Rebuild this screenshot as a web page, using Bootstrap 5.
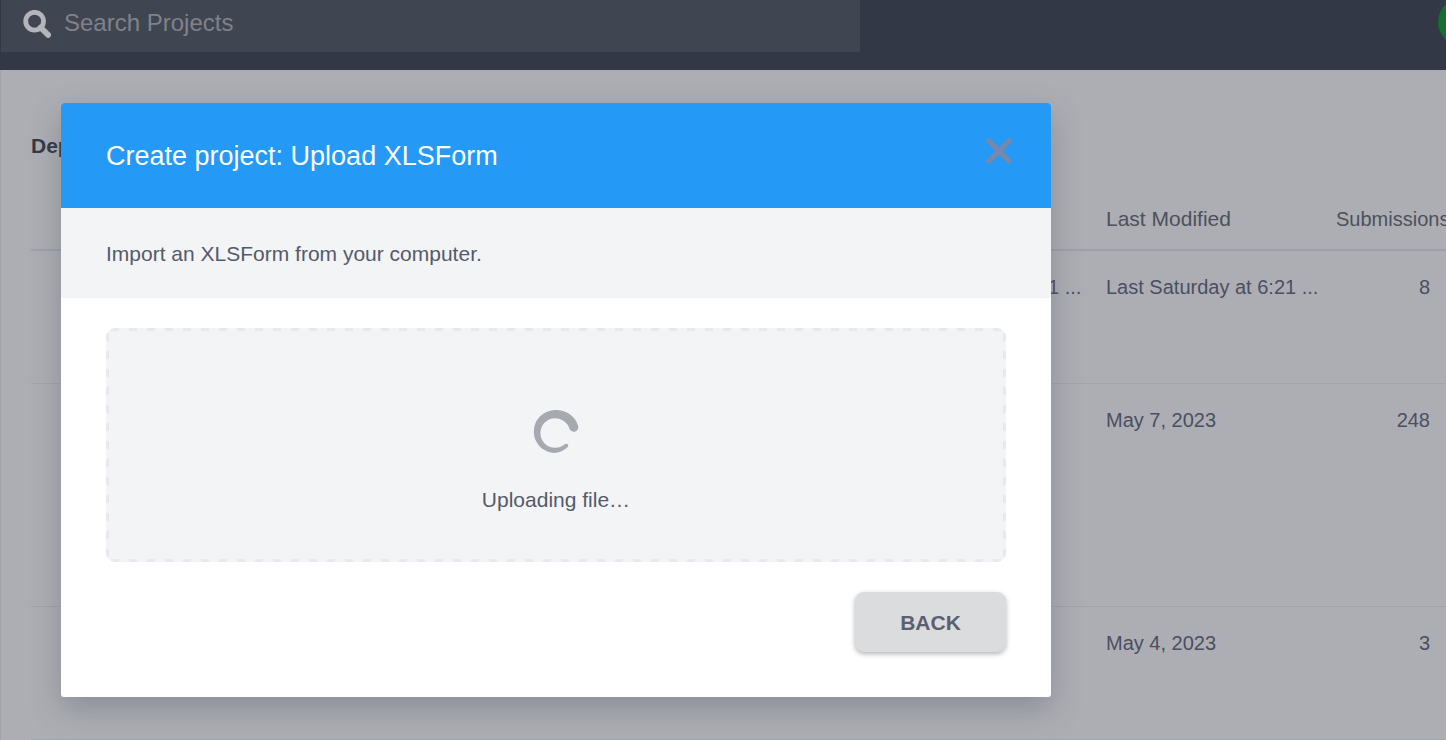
<!DOCTYPE html>
<html lang="en">
<head>
<meta charset="utf-8">
<meta name="viewport" content="width=device-width, initial-scale=1">
<title>Create project</title>
<link rel="stylesheet" href="https://cdn.jsdelivr.net/npm/bootstrap@5.3.0/dist/css/bootstrap.min.css">
<style>
  body { font-family: "Liberation Sans", Arial, sans-serif; font-size: 21px; line-height: 30px; color: #555a6b; background: #adaeb3; }
  .page-shell { min-height: 100vh; }
  .top-bar { height: 70px; background: #333846; }
  .search-box { width: 59.4%; height: 52px; padding-left: 22px; padding-bottom: 6px; margin-left: 1px; gap: 13px; background: #404552; color: #b4b5ba; }
  .search-box input { font-size: 24px; line-height: 30px; color: #7f828b; }
  .search-box input::placeholder { color: #7f828b; opacity: 1; }
  .search-box svg { margin-top: 2px; }
  .avatar { width: 48px; height: 48px; margin-right: -40px; margin-top: -2px; background: #157030; }
  .project-list { border-left: 1px solid #a1a2ad; padding: 60px 0 0 30px; }
  .group-title { font-size: 21px; line-height: 30px; font-weight: 700; color: #333846; margin: 1px 0 43px; }
  .project-table { table-layout: fixed; --bs-table-bg: transparent; --bs-table-color: #4a4f63; border-color: #a1a3ae; font-size: 20px; }
  .project-table th { height: 46px; padding: 0 15px 15px; font-size: 21px; font-weight: 400; color: #4c515c; white-space: nowrap; border-bottom: 2px solid #9d9fac; }
  .project-table td { padding: 21px 15px; white-space: nowrap; }
  .project-table th.count-head { font-size: 20px; }
  .project-table .count-cell { font-size: 20px; padding-right: 16px; text-align: right; }
  .project-table .tall-row td { height: 223px; }
  .project-table .short-row td { height: 133px; }
  .col-deployed { width: 237px; }
  .col-modified { width: 230px; }
  .col-count { width: 125px; }
  .overlay { position: absolute; top: 0; left: 0; right: 0; padding: 103px 61px 40px; }
  .upload-dialog { max-width: 990px; border-radius: 3px; background: #fff; box-shadow: 0 12px 30px rgba(80, 86, 106, .36); }
  .dialog-top { height: 105px; padding: 0 37px 0 45px; background: #2499f5; border-radius: 3px 3px 0 0; }
  .dialog-top h1 { font-size: 27px; line-height: 36px; font-weight: 400; color: #fff; }
  .close-x { margin-bottom: 10px; }
  .dialog-note { padding: 31px 45px 29px; background: #f2f4f6; }
  .dialog-main { padding: 30px 45px 45px; }
  .drop-zone {
    --dash: transparent 0 5px, #e7e9ef 5px 13px, transparent 13px 18px;
    height: 234px; padding-top: 81px; border-radius: 9px;
    background:
      repeating-linear-gradient(90deg, var(--dash)) top / 100% 3px no-repeat,
      repeating-linear-gradient(90deg, var(--dash)) bottom / 100% 3px no-repeat,
      repeating-linear-gradient(180deg, var(--dash)) left / 3px 100% no-repeat,
      repeating-linear-gradient(180deg, var(--dash)) right / 3px 100% no-repeat,
      #f2f4f6;
  }
  .drop-zone p { margin-top: 30px; }
  .back-btn { width: 151px; height: 60px; padding: 8px 0 6px; border: 0; border-radius: 9px; font-size: 21px; font-weight: 700; color: #5b6070; background: #dbdcde; box-shadow: 0 2px 5px rgba(0, 0, 0, .3); margin-top: 30px; }
</style>
</head>
<body>
<div class="page-shell position-relative overflow-hidden d-flex flex-column">
  <header class="top-bar d-flex justify-content-between align-items-start">
    <label class="search-box d-flex align-items-center">
      <svg class="flex-shrink-0" width="28" height="28" viewBox="0 0 28 28" fill="none" stroke="currentColor" aria-hidden="true">
        <circle cx="11.6" cy="11.2" r="8.9" stroke-width="4.8"/>
        <path d="M17.5 17.5l7.6 7.4" stroke-width="5.8" stroke-linecap="round"/>
      </svg>
      <input type="text" class="form-control bg-transparent border-0 shadow-none p-0" placeholder="Search Projects" aria-label="Search Projects">
    </label>
    <div class="avatar rounded-circle flex-shrink-0"></div>
  </header>

  <main class="project-list flex-grow-1">
    <h2 class="group-title">Deployed</h2>
    <table class="table project-table mb-0">
      <colgroup><col><col class="col-deployed"><col class="col-modified"><col class="col-count"></colgroup>
      <thead>
        <tr><th></th><th></th><th scope="col">Last Modified</th><th scope="col" class="count-head">Submissions</th></tr>
      </thead>
      <tbody>
        <tr class="short-row"><td></td><td>Last Saturday at 6:21 ...</td><td>Last Saturday at 6:21 ...</td><td class="count-cell">8</td></tr>
        <tr class="tall-row"><td></td><td></td><td>May 7, 2023</td><td class="count-cell">248</td></tr>
        <tr class="short-row"><td></td><td></td><td>May 4, 2023</td><td class="count-cell">3</td></tr>
      </tbody>
    </table>
  </main>

  <div class="overlay">
    <section class="upload-dialog" role="dialog" aria-labelledby="dialog-title">
      <div class="dialog-top d-flex justify-content-between align-items-center">
        <h1 id="dialog-title" class="mb-0">Create project: Upload XLSForm</h1>
        <button type="button" class="close-x btn border-0 p-0 d-flex" aria-label="Close">
          <svg width="30" height="30" viewBox="0 0 30 30" fill="none" stroke="#7b87a6" stroke-width="5" stroke-linecap="round" aria-hidden="true">
            <path d="M4.7 4.7l20.6 20.6M25.3 4.7L4.7 25.3"/>
          </svg>
        </button>
      </div>
      <div class="dialog-note">Import an XLSForm from your computer.</div>
      <div class="dialog-main">
        <div class="drop-zone d-flex flex-column align-items-center">
          <svg width="48" height="46" viewBox="0 0 48 46" fill="#a6a9b1" aria-hidden="true">
            <path d="M35.4 38.3A20.5 20.5 0 0 1 22.8 43.9A21 21.4 0 0 1 1.8 22.5A21.6 21.4 0 0 1 23.4 1A23 22 0 0 1 46 16.5A4.4 4.4 0 0 1 37.5 19.8A15 14.6 0 0 0 23.3 9.3A14.8 14.8 0 0 0 8.4 24.1A14.6 14.6 0 0 0 23 38.8A15 15 0 0 0 33.2 35.1A1.9 1.9 0 0 1 35.4 38.3Z"/>
          </svg>
          <p class="mb-0">Uploading file…</p>
        </div>
        <div class="d-flex justify-content-end">
          <button type="button" class="back-btn btn">BACK</button>
        </div>
      </div>
    </section>
  </div>
</div>
<script src="https://cdn.jsdelivr.net/npm/bootstrap@5.3.0/dist/js/bootstrap.bundle.min.js"></script>
</body>
</html>
